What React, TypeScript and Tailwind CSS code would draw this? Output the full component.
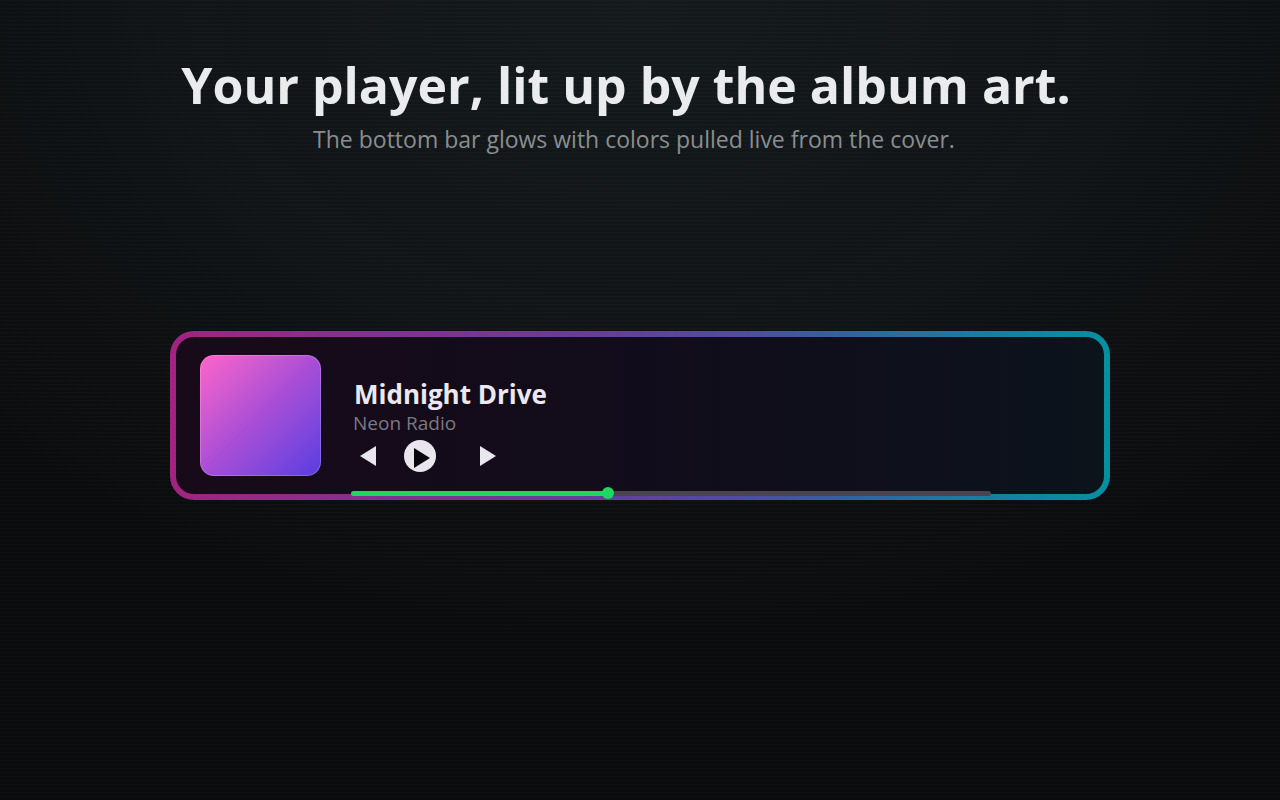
import { useState } from 'react';

export default function App() {
  const [position, setPosition] = useState(40);

  return (
    <main className="min-h-screen bg-[repeating-linear-gradient(180deg,rgba(255,255,255,0.02)_0px,rgba(255,255,255,0.02)_1px,transparent_2px,transparent_4px),radial-gradient(ellipse_900px_640px_at_50%_0%,#14191c_0%,#101416_50%,#0a0b0c_100%)] px-6 pt-[53px] font-['Open_Sans','Noto_Sans',sans-serif]">
      <header className="flex flex-col items-center text-center">
        <h1 className="pr-7 text-[50px] leading-[64px] font-bold text-[#e9ebed]">
          Your player, lit up by the album art.
        </h1>
        <p className="mt-1 pr-3 text-[23px] leading-9 text-[#8b8e90]">
          The bottom bar glows with colors pulled live from the cover.
        </p>
      </header>

      <section
        aria-label="Now playing"
        className="mx-auto mt-[174px] max-w-[940px] rounded-[24px] bg-[linear-gradient(90deg,#a1247f_0%,#673c9f_45%,#514aa5_60%,#3560a5_72%,#1a7ca2_85%,#0590a0_100%)] p-[6px]"
      >
        <div className="flex items-start gap-[30px] rounded-[18px] bg-linear-to-r from-[#180a19] via-[#110c1b] to-[#0b131b] px-6 py-[18px]">
          <div className="size-[121px] shrink-0 rounded-[14px] border border-white/20 bg-linear-to-br from-[#ff63c8] via-[#a94dd6] to-[#573be0] bg-origin-border" />
          <div className="-mb-6 flex w-full max-w-[640px] flex-col pt-[22px]">
            <h2 className="pl-[3px] text-[26px] leading-[34px] font-bold text-[#ebe9ef]">Midnight Drive</h2>
            <p className="pl-0.5 text-[19px] leading-6 text-[#7c7883]">Neon Radio</p>
            <div className="flex h-[42px] items-center pl-[9px] text-[#e9e6ee]">
              <button type="button" aria-label="Previous track" className="h-5 w-4">
                <svg viewBox="0 0 16 20" className="h-5 w-4" fill="currentColor" aria-hidden="true">
                  <path d="M16 0v20L0 10z" />
                </svg>
              </button>
              <button type="button" aria-label="Play" className="ml-7 size-8 rounded-full bg-[#e9e6ee] text-[#0a080c]">
                <svg viewBox="0 0 32 32" className="size-8" fill="currentColor" aria-hidden="true">
                  <path d="M10 8v20l16-10z" />
                </svg>
              </button>
              <button type="button" aria-label="Next track" className="ml-11 h-5 w-4">
                <svg viewBox="0 0 16 20" className="h-5 w-4" fill="currentColor" aria-hidden="true">
                  <path d="M0 0v20l16-10z" />
                </svg>
              </button>
            </div>
            <input
              type="range"
              aria-label="Track position"
              min={0}
              max={100}
              value={position}
              onChange={(event) => setPosition(Number(event.target.value))}
              className="mt-2.5 h-3 w-full cursor-pointer appearance-none bg-transparent [&::-webkit-slider-runnable-track]:h-[5px] [&::-webkit-slider-runnable-track]:rounded-full [&::-webkit-slider-runnable-track]:bg-[linear-gradient(90deg,#1ed760_var(--played),#4a444f_var(--played))] [&::-webkit-slider-thumb]:-mt-1 [&::-webkit-slider-thumb]:size-3 [&::-webkit-slider-thumb]:appearance-none [&::-webkit-slider-thumb]:rounded-full [&::-webkit-slider-thumb]:bg-[#1ed760]"
              style={{ '--played': `${position}%` } as React.CSSProperties}
            />
          </div>
        </div>
      </section>
    </main>
  );
}
